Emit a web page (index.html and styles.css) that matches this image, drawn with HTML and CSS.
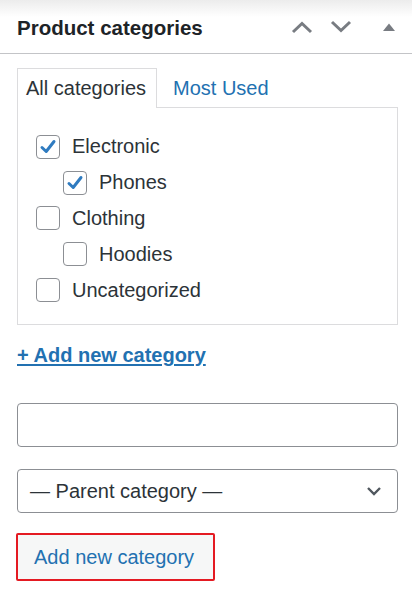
FILE: index.html
```html
<!DOCTYPE html>
<html>
<head>
<meta charset="utf-8">
<link rel="stylesheet" href="styles.css">
</head>
<body>
<div class="box">
  <div class="header">
    <h2 class="title">Product categories</h2>
    <div class="actions">
      <svg class="ico" width="22" height="14" viewBox="0 0 22 14"><path d="M2 12 L11 3.5 L20 12" fill="none" stroke="#787c82" stroke-width="3"/></svg>
      <svg class="ico" width="22" height="14" viewBox="0 0 22 14"><path d="M2 2 L11 10.5 L20 2" fill="none" stroke="#787c82" stroke-width="3"/></svg>
      <svg class="ico tri" width="14" height="10" viewBox="0 0 14 10"><path d="M1 9 L7 1.5 L13 9 Z" fill="#787c82"/></svg>
    </div>
  </div>
  <div class="inside">
    <ul class="tabs">
      <li class="tab active">All categories</li>
      <li class="tab"><a href="#">Most Used</a></li>
    </ul>
    <div class="panel">
      <ul class="cats">
        <li class="cat"><span class="cb checked"><svg width="22" height="22" viewBox="0 0 22 22"><path d="M5 11.5 L9.2 15.5 L17 5.5" fill="none" stroke="#2f7bc0" stroke-width="3" stroke-linecap="round" stroke-linejoin="round"/></svg></span><span class="lbl">Electronic</span></li>
        <li class="cat child"><span class="cb checked"><svg width="22" height="22" viewBox="0 0 22 22"><path d="M5 11.5 L9.2 15.5 L17 5.5" fill="none" stroke="#2f7bc0" stroke-width="3" stroke-linecap="round" stroke-linejoin="round"/></svg></span><span class="lbl">Phones</span></li>
        <li class="cat"><span class="cb"></span><span class="lbl">Clothing</span></li>
        <li class="cat child"><span class="cb"></span><span class="lbl">Hoodies</span></li>
        <li class="cat"><span class="cb"></span><span class="lbl">Uncategorized</span></li>
      </ul>
    </div>
    <a class="add-link" href="#">+ Add new category</a>
    <div class="field input"></div>
    <div class="field select">
      <span>— Parent category —</span>
      <svg width="16" height="10" viewBox="0 0 16 10"><path d="M2 2 L8 8 L14 2" fill="none" stroke="#50575e" stroke-width="2.4"/></svg>
    </div>
    <button class="btn">Add new category</button>
  </div>
</div>
</body>
</html>
```
FILE: styles.css
```css
* { box-sizing: border-box; }
html, body { margin: 0; padding: 0; background: #fff; }
body {
  font-family: "Liberation Sans", Arial, sans-serif;
  color: #2c3338;
  width: 412px;
  height: 596px;
  overflow: hidden;
}
.header {
  height: 54px;
  display: flex;
  align-items: center;
  justify-content: space-between;
  padding: 0 16px 0 17px;
  border-bottom: 1px solid #c3c4c7;
  background: linear-gradient(#ececec 0px, #ffffff 17px);
}
.title {
  margin: 0;
  font-size: 20.5px;
  font-weight: bold;
  color: #1d2327;
  padding-top: 2px;
}
.actions {
  display: flex;
  align-items: center;
  gap: 17px;
  padding-top: 1px;
}
.ico { display: block; }
.tri { margin-left: 13px; }
.inside {
  padding: 14px 14px 0 17px;
}
.tabs {
  list-style: none;
  margin: 0;
  padding: 0;
  display: flex;
  height: 39px;
  position: relative;
  z-index: 1;
}
.tab {
  font-size: 20px;
  line-height: 38px;
  padding: 0 8px;
  border: 1px solid transparent;
  border-bottom: 0;
}
.tab.active {
  border-color: #dcdcde;
  background: #fff;
  height: 40px;
  color: #2c3338;
  width: 140px;
}
.tab a {
  color: #2271b1;
  text-decoration: none;
  padding-left: 7px;
}
.panel {
  border: 1px solid #dcdcde;
  height: 218px;
  padding: 21px 0 0 18px;
}
.cats { list-style: none; margin: 0; padding: 0; }
.cat {
  height: 35.8px;
  display: flex;
  align-items: center;
  font-size: 20px;
}
.cat.child { padding-left: 27px; }
.cb {
  width: 24px;
  height: 24px;
  border: 1px solid #8c8f94;
  border-radius: 4px;
  display: flex;
  align-items: center;
  justify-content: center;
  flex: none;
  background: #fff;
}
.cb svg { display: block; }
.lbl { margin-left: 12px; color: #2c3338; }
.add-link {
  display: inline-block;
  margin-top: 18px;
  font-size: 20px;
  line-height: 24px;
  font-weight: bold;
  color: #2271b1;
  text-decoration: underline;
  text-underline-offset: 2px;
}
.field {
  border: 1px solid #8c8f94;
  border-radius: 4px;
  height: 44px;
  width: 381px;
  background: #fff;
}
.input { margin-top: 36px; }
.select {
  margin-top: 22px;
  display: flex;
  align-items: center;
  justify-content: space-between;
  padding: 0 15px 0 12px;
  font-size: 20px;
  color: #2c3338;
}
.select svg { display: block; }
.btn {
  display: block;
  margin: 20px 0 0 -1px;
  height: 48px;
  width: 199px;
  padding: 0 0 0 16px;
  text-align: left;
  border: 2px solid #e41a22;
  border-radius: 2px;
  background: #f6f7f7;
  color: #2271b1;
  font-family: "Liberation Sans", Arial, sans-serif;
  font-size: 20px;
}
```
